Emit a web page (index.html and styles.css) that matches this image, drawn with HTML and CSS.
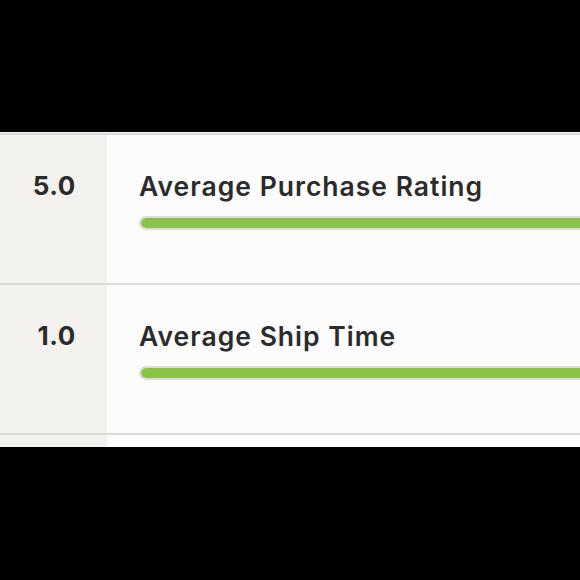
FILE: index.html
```html
<!DOCTYPE html>
<html>
<head>
<meta charset="utf-8">
<link rel="stylesheet" href="styles.css">
</head>
<body>
<div class="panel">
  <div class="table">
    <div class="row">
      <div class="score">5.0</div>
      <div class="detail">
        <div class="label">Average Purchase Rating</div>
        <div class="track"><div class="fill" style="width:100%"></div></div>
      </div>
    </div>
    <div class="row">
      <div class="score">1.0</div>
      <div class="detail">
        <div class="label">Average Ship Time</div>
        <div class="track"><div class="fill" style="width:100%"></div></div>
      </div>
    </div>
    <div class="row stub">
      <div class="score"></div>
      <div class="detail"></div>
    </div>
  </div>
</div>
</body>
</html>
```
FILE: styles.css
```css
html, body {
  margin: 0;
  padding: 0;
  background: #000;
  overflow: hidden;
}
body {
  padding-top: 132px;
  height: 580px;
  box-sizing: border-box;
  font-family: Inter, "Liberation Sans", sans-serif;
  color: #2b2b2b;
}
.panel {
  border-top: 1px solid #f6f6f6;
  background: #fcfcfc;
}
.table {
  border-top: 2px solid #dcd9d9;
  overflow: hidden;
}
.row {
  display: flex;
  height: 148px;
  border-bottom: 2px solid #dddada;
}
.row.stub {
  height: 12px;
  border-bottom: none;
}
.score {
  width: 107px;
  flex: none;
  box-sizing: border-box;
  background: #f3f2ef;
  text-align: right;
  padding-right: 31px;
  padding-top: 35px;
  font-size: 26px;
  line-height: 32px;
  font-weight: 700;
  letter-spacing: 0.6px;
}
.detail {
  flex: 1;
  padding-left: 32px;
  padding-top: 35px;
  background: #fcfcfc;
  min-width: 0;
}
.label {
  font-size: 26.5px;
  line-height: 32px;
  font-weight: 600;
  letter-spacing: 1px;
  white-space: nowrap;
}
.track {
  margin-top: 14px;
  width: 600px;
  height: 14px;
  box-sizing: border-box;
  border: 2px solid #dedbd4;
  border-radius: 7px;
  background: #e6e3dd;
  overflow: hidden;
}
.fill {
  height: 100%;
  background: #8bc34a;
  border-radius: 5px;
}
```
